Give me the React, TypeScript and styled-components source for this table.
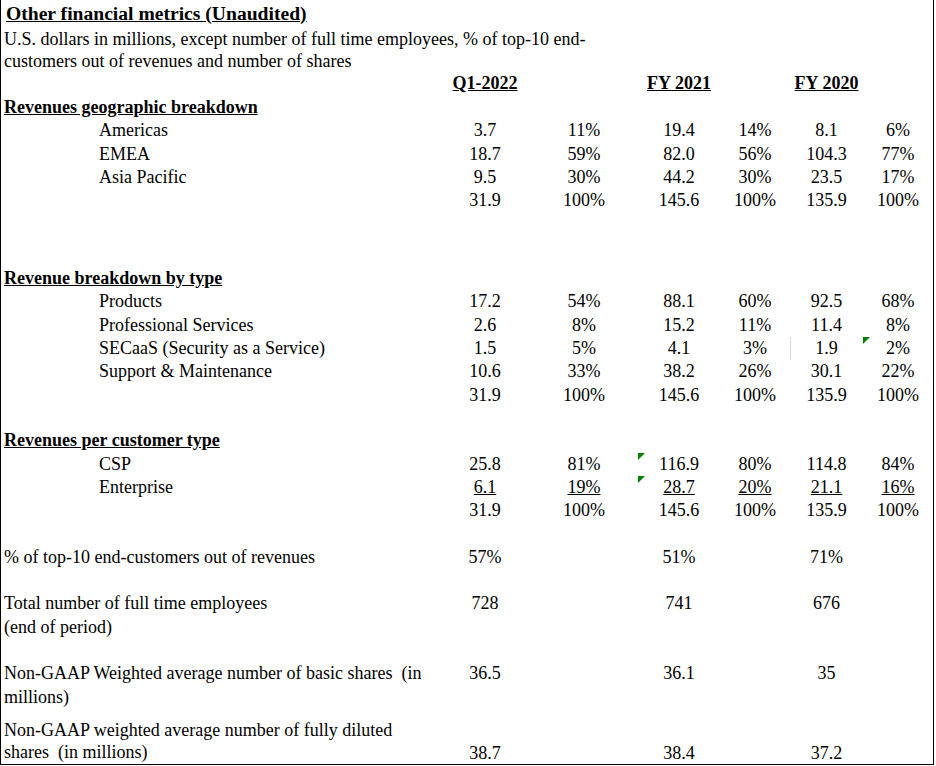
import React from 'react';
import styled, { createGlobalStyle, css } from 'styled-components';

const Global = createGlobalStyle`
  html, body { margin: 0; padding: 0; background: #fff; }
  body { font-family: "Liberation Serif", "Times New Roman", serif; color: #000; }
`;

const COLS = '439px 90px 108px 82px 70px 73px 70px';

const Sheet = styled.div`
  width: 934px;
  height: 765px;
  box-sizing: border-box;
  border-left: 1px solid #000;
  border-right: 1px solid #000;
  border-bottom: 1px solid #000;
  display: flex;
  flex-direction: column;
  overflow: hidden;
  font-size: 18px;
  background: #fff;
`;

const Row = styled.div<{ $h: number; $lh?: number }>`
  display: grid;
  grid-template-columns: ${COLS};
  height: ${p => p.$h}px;
  line-height: ${p => p.$lh ?? 23.33}px;
  flex: none;
`;

const Spacer = styled.div<{ $h: number }>`
  height: ${p => p.$h}px;
  flex: none;
`;

const Title = styled.div`
  grid-column: 1 / -1;
  align-self: center;
  padding-left: 5px;
  font-weight: bold;
  font-size: 19.6px;
  text-decoration: underline;
  white-space: nowrap;
`;

const Note = styled.div`
  grid-column: 1 / -1;
  align-self: end;
  padding-left: 3px;
  white-space: nowrap;
`;

const Label = styled.div<{ $indent?: boolean; $head?: boolean }>`
  padding-left: ${p => (p.$indent ? '98px' : '3px')};
  white-space: nowrap;
  align-self: ${p => (p.$head ? 'center' : 'start')};
  ${p =>
    p.$head &&
    css`
      font-weight: bold;
      text-decoration: underline;
    `}
`;

const ColHead = styled.div`
  text-align: center;
  align-self: center;
  font-weight: bold;
  text-decoration: underline;
  white-space: nowrap;
`;

const Num = styled.div<{ $u?: boolean; $flag?: boolean; $rule?: boolean; $at?: 'start' | 'end' | 'center' }>`
  position: relative;
  text-align: center;
  white-space: nowrap;
  align-self: ${p => p.$at ?? 'center'};
  ${p => p.$u && css`text-decoration: underline;`}
  ${p => p.$rule && css`box-shadow: inset 1px 0 0 #d9d9d9;`}
  ${p =>
    p.$flag &&
    css`
      &::before {
        content: '';
        position: absolute;
        left: 0;
        top: 0;
        border-top: 7px solid #008000;
        border-right: 7px solid transparent;
      }
    `}
`;

type Line = {
  label: string;
  vals: string[];
  u?: boolean;
  flags?: number[];
  rules?: number[];
};

const DataRow = ({ label, vals, u, flags = [], rules = [] }: Line) => (
  <Row $h={23.33}>
    <Label $indent={label !== ''}>{label}</Label>
    {vals.map((v, i) => (
      <Num key={i} $u={u} $flag={flags.includes(i)} $rule={rules.includes(i)}>
        {v}
      </Num>
    ))}
  </Row>
);

const TOTAL = ['31.9', '100%', '145.6', '100%', '135.9', '100%'];

const Single = ({ vals, at }: { vals: string[]; at?: 'start' | 'end' | 'center' }) => (
  <>
    <Num $at={at}>{vals[0]}</Num>
    <div />
    <Num $at={at}>{vals[1]}</Num>
    <div />
    <Num $at={at}>{vals[2]}</Num>
    <div />
  </>
);

export default function App() {
  return (
    <>
      <Global />
      <Sheet>
        <Row $h={27}>
          <Title>Other financial metrics (Unaudited)</Title>
        </Row>
        <Row $h={45} $lh={22}>
          <Note>
            U.S. dollars in millions, except number of full time employees, % of top-10 end-
            <br />
            customers out of revenues and number of shares
          </Note>
        </Row>
        <Row $h={24}>
          <div />
          <ColHead>Q1-2022</ColHead>
          <div />
          <ColHead>FY 2021</ColHead>
          <div />
          <ColHead>FY 2020</ColHead>
          <div />
        </Row>

        <Row $h={23.33}>
          <Label $head>Revenues geographic breakdown</Label>
        </Row>
        <DataRow label="Americas" vals={['3.7', '11%', '19.4', '14%', '8.1', '6%']} />
        <DataRow label="EMEA" vals={['18.7', '59%', '82.0', '56%', '104.3', '77%']} />
        <DataRow label="Asia Pacific" vals={['9.5', '30%', '44.2', '30%', '23.5', '17%']} />
        <DataRow label="" vals={TOTAL} />

        <Spacer $h={54.33} />

        <Row $h={23.33}>
          <Label $head>Revenue breakdown by type</Label>
        </Row>
        <DataRow label="Products" vals={['17.2', '54%', '88.1', '60%', '92.5', '68%']} />
        <DataRow label="Professional Services" vals={['2.6', '8%', '15.2', '11%', '11.4', '8%']} />
        <DataRow
          label="SECaaS (Security as a Service)"
          vals={['1.5', '5%', '4.1', '3%', '1.9', '2%']}
          flags={[5]}
          rules={[4]}
        />
        <DataRow label="Support & Maintenance" vals={['10.6', '33%', '38.2', '26%', '30.1', '22%']} />
        <DataRow label="" vals={TOTAL} />

        <Spacer $h={22.33} />

        <Row $h={23.33}>
          <Label $head>Revenues per customer type</Label>
        </Row>
        <DataRow label="CSP" vals={['25.8', '81%', '116.9', '80%', '114.8', '84%']} flags={[2]} />
        <DataRow
          label="Enterprise"
          vals={['6.1', '19%', '28.7', '20%', '21.1', '16%']}
          u
          flags={[2]}
        />
        <DataRow label="" vals={TOTAL} />

        <Spacer $h={23.67} />

        <Row $h={23.33}>
          <Label>% of top-10 end-customers out of revenues</Label>
          <Single vals={['57%', '51%', '71%']} at="center" />
        </Row>

        <Spacer $h={22.67} />

        <Row $h={46.67}>
          <Label>
            Total number of full time employees
            <br />
            (end of period)
          </Label>
          <Single vals={['728', '741', '676']} at="start" />
        </Row>

        <Spacer $h={23.33} />

        <Row $h={46.67}>
          <Label>
            Non-GAAP Weighted average number of basic shares&nbsp; (in
            <br />
            millions)
          </Label>
          <Single vals={['36.5', '36.1', '35']} at="start" />
        </Row>

        <Spacer $h={10} />

        <Row $h={45} $lh={22}>
          <Label>
            Non-GAAP weighted average number of fully diluted
            <br />
            shares&nbsp; (in millions)
          </Label>
          <Single vals={['38.7', '38.4', '37.2']} at="end" />
        </Row>
      </Sheet>
    </>
  );
}
